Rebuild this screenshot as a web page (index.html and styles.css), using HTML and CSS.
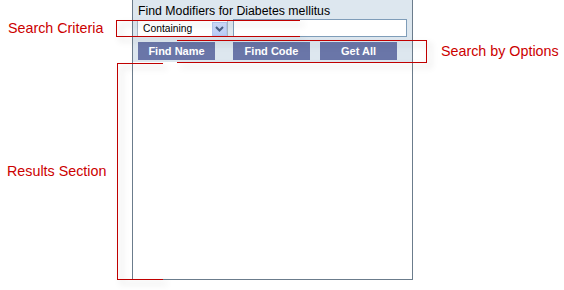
FILE: index.html
```html
<!DOCTYPE html>
<html>
<head>
<meta charset="utf-8">
<link rel="stylesheet" href="styles.css">
</head>
<body>
<div class="page">
  <div class="panel">
    <div class="header">
      <div class="title">Find Modifiers for Diabetes mellitus</div>
      <div class="criteria">
        <div class="select">
          <span class="select-text">Containing</span>
          <span class="select-btn"><svg width="9" height="6" viewBox="0 0 9 6"><path d="M1 1 L4.5 4.5 L8 1" fill="none" stroke="#4a5f86" stroke-width="2"/></svg></span>
        </div>
        <div class="textbox"></div>
      </div>
      <div class="buttons">
        <span class="btn btn-name">Find Name</span>
        <span class="btn btn-code">Find Code</span>
        <span class="btn btn-all">Get All</span>
      </div>
    </div>
    <div class="results"></div>
  </div>

  <div class="note-box box-criteria"></div>
  <div class="note-box box-options"></div>
  <div class="note-box box-results"></div>
  <div class="note-label label-criteria">Search Criteria</div>
  <div class="note-label label-options">Search by Options</div>
  <div class="note-label label-results">Results Section</div>
</div>
</body>
</html>
```

FILE: styles.css
```css
html, body {
  margin: 0;
  padding: 0;
  background: #ffffff;
}

.page {
  position: relative;
  width: 564px;
  height: 290px;
  overflow: hidden;
  font-family: "Liberation Sans", Arial, sans-serif;
}

.panel {
  margin-left: 132px;
  width: 279px;
  height: 279px;
  border-left: 1px solid #6b7c8c;
  border-right: 1px solid #6b7c8c;
  border-bottom: 1px solid #6b7c8c;
  display: flex;
  flex-direction: column;
}

.header {
  background: #dde7ef;
  height: 62px;
  box-sizing: border-box;
  padding: 4px 0 0 0;
}

.title {
  font-size: 12.3px;
  line-height: 14px;
  color: #000000;
  padding-left: 5px;
  white-space: nowrap;
}

.criteria {
  display: flex;
  align-items: flex-start;
  margin-top: 1px;
  padding-left: 4px;
  gap: 5px;
}

.select {
  margin-top: 1px;
  width: 91px;
  height: 17px;
  box-sizing: border-box;
  border: 1px solid #a9b6c4;
  background: #ffffff;
  display: flex;
  align-items: center;
  justify-content: space-between;
}

.select-text {
  font-size: 10.3px;
  color: #000000;
  padding-left: 5px;
}

.select-btn {
  width: 15px;
  height: 14px;
  box-sizing: border-box;
  margin-top: 1px;
  background: linear-gradient(#cfdcfb, #b9cbf5);
  border: 1px solid #b4c6ee;
  display: flex;
  align-items: center;
  justify-content: center;
}

.select-btn svg {
  display: block;
}

.textbox {
  width: 174px;
  height: 18px;
  box-sizing: border-box;
  border: 1px solid #7f9db9;
  background: #ffffff;
}

.buttons {
  display: flex;
  margin-top: 5px;
  padding-left: 5px;
}

.btn {
  width: 77px;
  height: 18px;
  line-height: 18px;
  background: #6a76a8;
  color: #ffffff;
  font-size: 11px;
  font-weight: bold;
  text-align: center;
}

.btn-code {
  margin-left: 18px;
}

.btn-all {
  margin-left: 10px;
}

.results {
  flex: 1;
  background: #ffffff;
}

/* annotations overlay */
.note-box {
  position: absolute;
  box-sizing: border-box;
  filter: drop-shadow(4px 4px 3px rgba(0, 0, 0, 0.22));
}

.box-criteria {
  left: 116px;
  top: 20px;
  width: 184px;
  height: 17px;
  border-top: 1px solid #c00000;
  border-bottom: 1px solid #c00000;
  border-left: 1px solid #c00000;
}

.box-options {
  left: 177px;
  top: 40px;
  width: 250px;
  height: 23px;
  border-top: 1px solid #c00000;
  border-bottom: 1px solid #c00000;
  border-right: 1px solid #c00000;
}

.box-results {
  left: 117px;
  top: 63px;
  width: 46px;
  height: 217px;
  border-top: 1px solid #c00000;
  border-bottom: 1px solid #c00000;
  border-left: 1px solid #c00000;
}

.note-label {
  position: absolute;
  font-size: 14.3px;
  line-height: 16px;
  color: #cc0000;
  white-space: nowrap;
}

.label-criteria {
  left: 8px;
  top: 20px;
}

.label-options {
  left: 441px;
  top: 43px;
}

.label-results {
  left: 7px;
  top: 163px;
}
```
